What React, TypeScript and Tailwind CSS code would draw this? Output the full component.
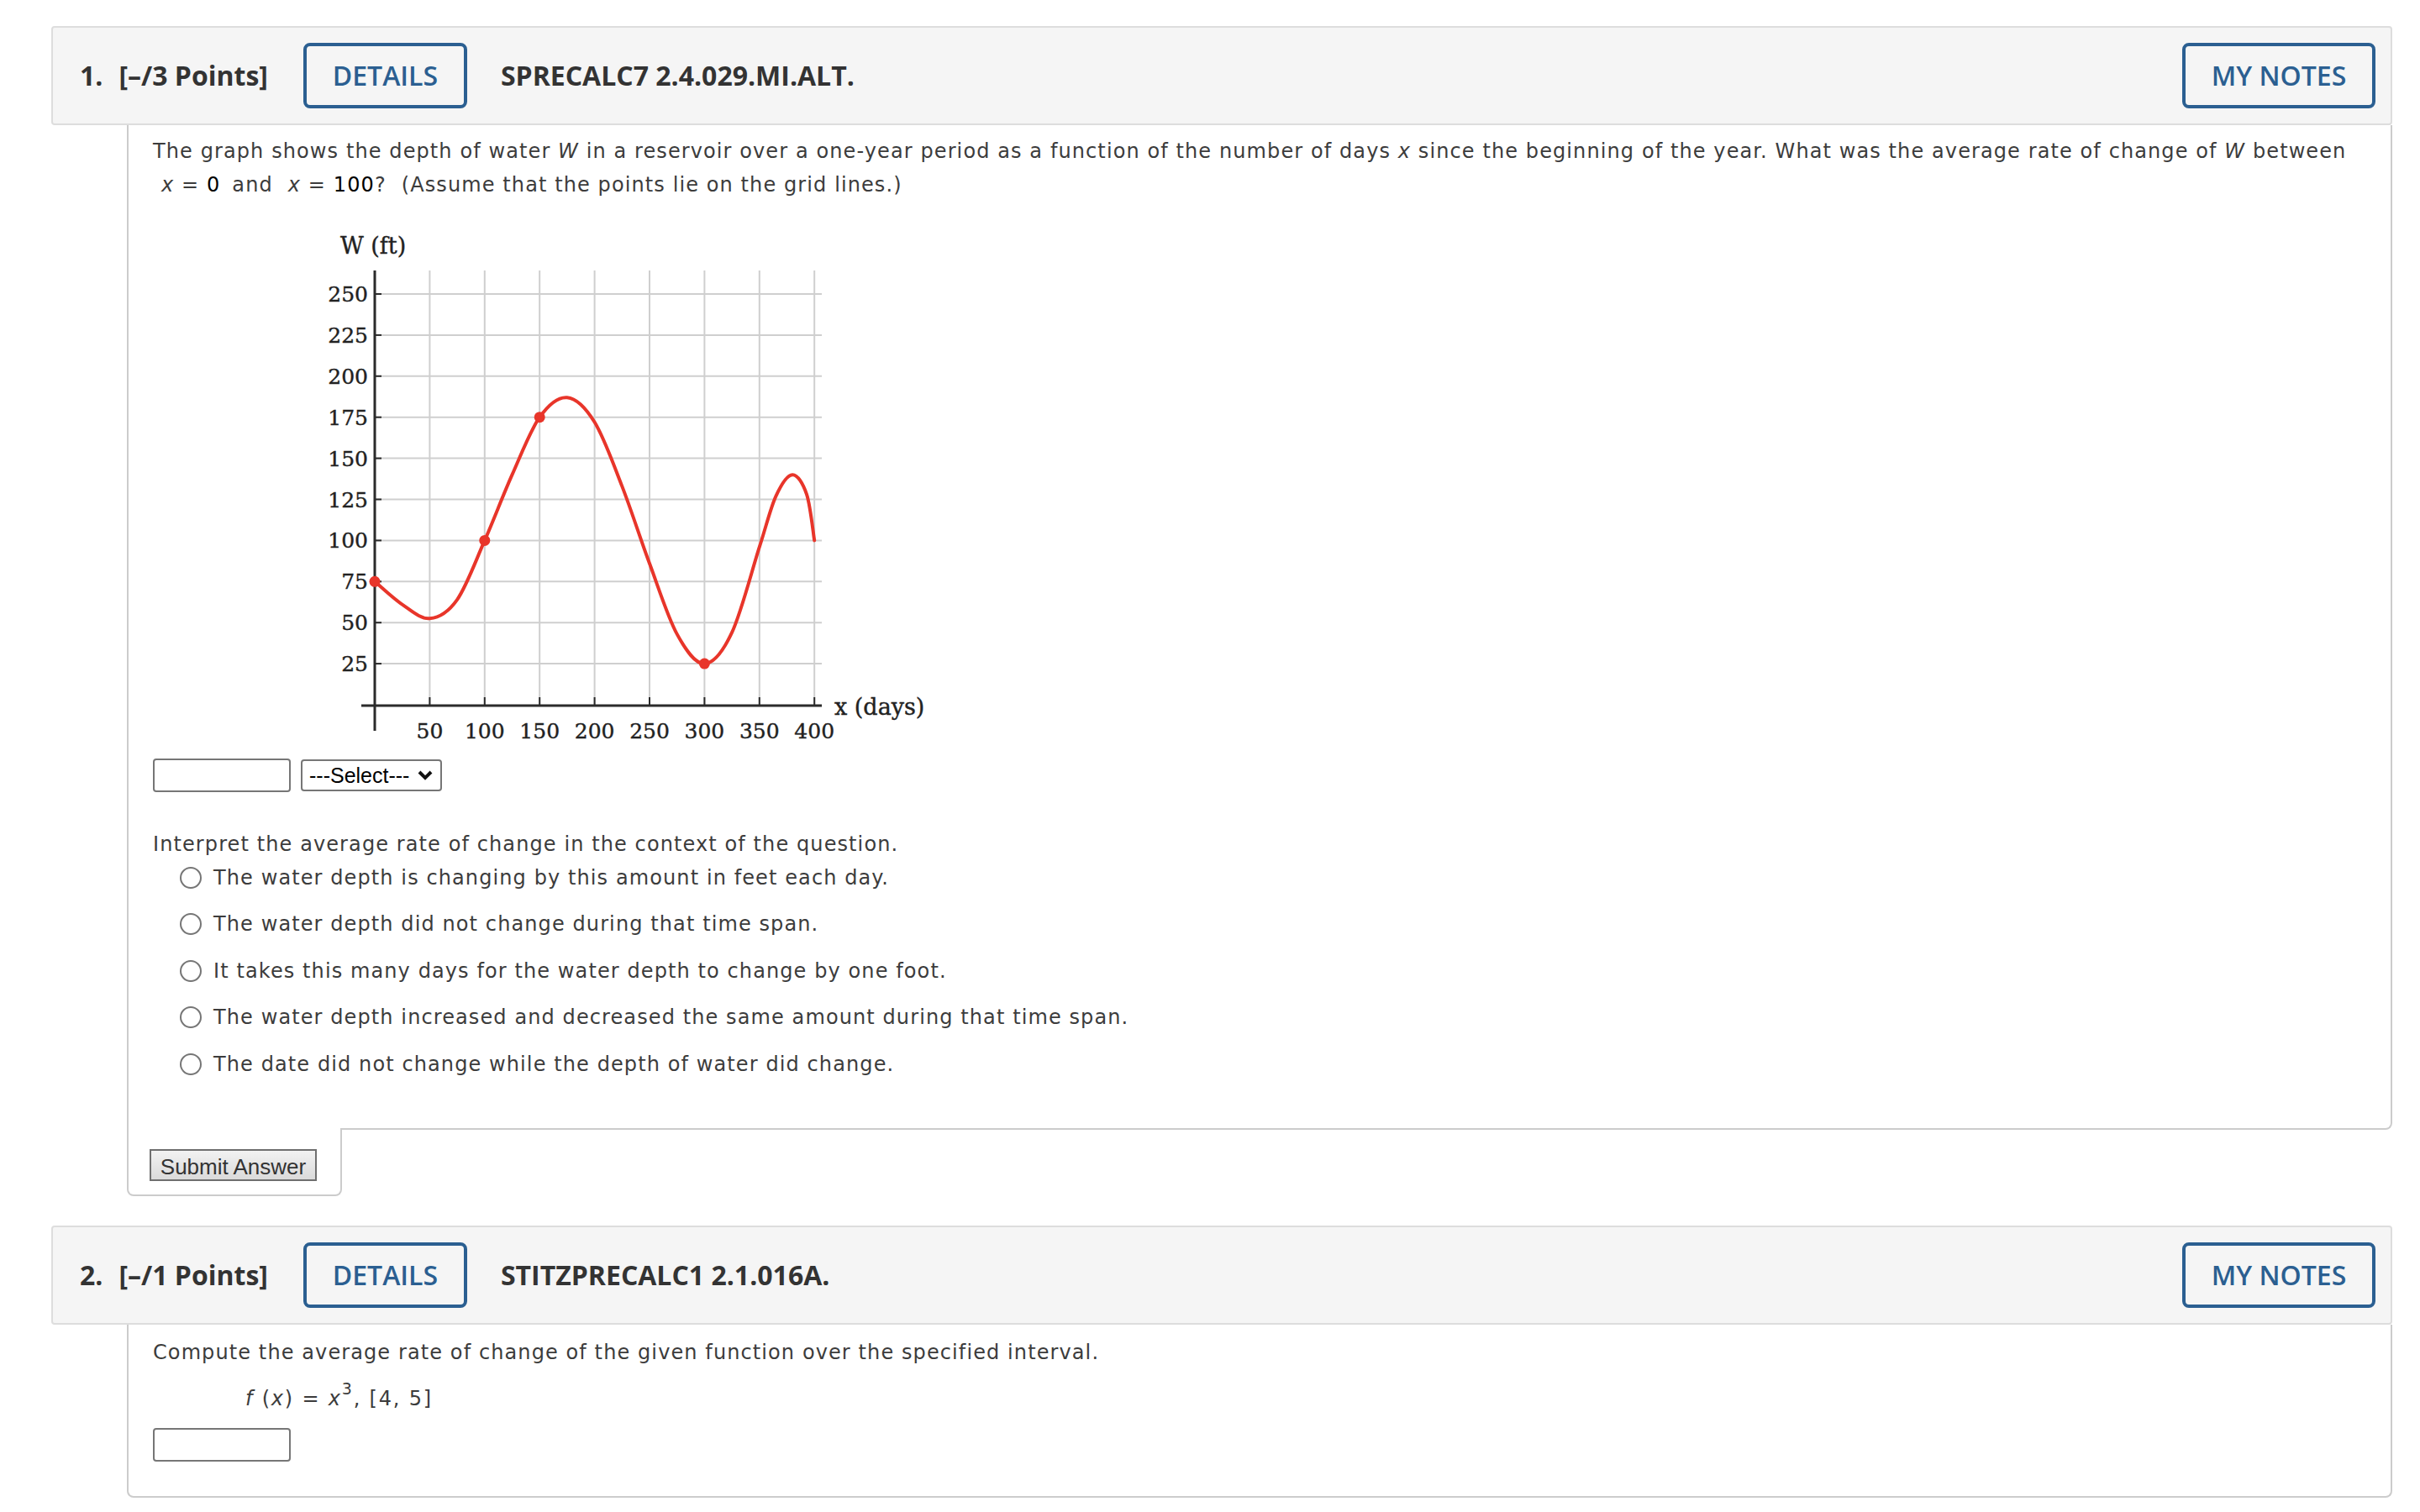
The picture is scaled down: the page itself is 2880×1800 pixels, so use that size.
import React from 'react';

// page coordinates of the plot: x days -> px, W ft -> py
const px = (x: number) => 446 + x * 1.308;
const py = (w: number) => 839 - w * 1.956;

const curvePoints: [number, number][] = [
  [0, 75], [25, 61], [50, 52.5], [75, 64], [100, 100], [125, 140], [150, 175],
  [175, 187], [200, 172], [225, 133], [250, 86], [275, 43], [300, 25], [325, 44],
  [350, 96], [365, 127], [380, 140], [393, 128], [400, 100],
];

function curvePath(pts: [number, number][]) {
  const p = pts.map(([x, w]) => [px(x), py(w)]);
  let d = `M${p[0][0]},${p[0][1]}`;
  for (let i = 0; i < p.length - 1; i++) {
    const p0 = p[i - 1] || p[i];
    const p1 = p[i];
    const p2 = p[i + 1];
    const p3 = p[i + 2] || p2;
    const c1x = p1[0] + (p2[0] - p0[0]) / 6;
    const c1y = p1[1] + (p2[1] - p0[1]) / 6;
    const c2x = p2[0] - (p3[0] - p1[0]) / 6;
    const c2y = p2[1] - (p3[1] - p1[1]) / 6;
    d += ` C${c1x},${c1y} ${c2x},${c2y} ${p2[0]},${p2[1]}`;
  }
  return d;
}

const DepthGraph = () => {
  const xs = [50, 100, 150, 200, 250, 300, 350, 400];
  const ws = [25, 50, 75, 100, 125, 150, 175, 200, 225, 250];
  const dots: [number, number][] = [[0, 75], [100, 100], [150, 175], [300, 25]];
  return (
    <svg width="760" height="620" viewBox="370 270 760 620" className="ml-[188px] mt-[30px] block tracking-normal">
      {/* grid */}
      {xs.map((x) => (
        <line key={`gx${x}`} x1={px(x)} y1={322} x2={px(x)} y2={840} stroke="#cfcfcf" strokeWidth="2" />
      ))}
      {ws.map((w) => (
        <line key={`gy${w}`} x1={446} y1={py(w)} x2={978} y2={py(w)} stroke="#cfcfcf" strokeWidth="2" />
      ))}
      {/* axes */}
      <line x1={446} y1={322} x2={446} y2={870} stroke="#2b2b2b" strokeWidth="3" />
      <line x1={430} y1={840} x2={978} y2={840} stroke="#2b2b2b" strokeWidth="3" />
      {ws.map((w) => (
        <line key={`ty${w}`} x1={446} y1={py(w)} x2={454} y2={py(w)} stroke="#2b2b2b" strokeWidth="2" />
      ))}
      {xs.map((x) => (
        <line key={`tx${x}`} x1={px(x)} y1={830} x2={px(x)} y2={840} stroke="#2b2b2b" strokeWidth="2" />
      ))}
      {/* labels */}
      <g fontFamily="'DejaVu Serif', serif" fill="#222222" fontSize="25" stroke="#222222" strokeWidth="0.4">
        {ws.map((w) => (
          <text key={`ly${w}`} x={438} y={py(w) + 9} textAnchor="end">{w}</text>
        ))}
        {xs.map((x) => (
          <text key={`lx${x}`} x={px(x)} y={879} textAnchor="middle">{x}</text>
        ))}
        <text x={405} y={302} fontSize="27">W (ft)</text>
        <text x={993} y={851} fontSize="27">x (days)</text>
      </g>
      {/* curve */}
      <path d={curvePath(curvePoints)} fill="none" stroke="#e8352a" strokeWidth="4" strokeLinecap="round" />
      {dots.map(([x, w]) => (
        <circle key={`d${x}`} cx={px(x)} cy={py(w)} r="6.5" fill="#e8352a" />
      ))}
    </svg>
  );
};

const Header = ({ num, points, code }: { num: string; points: string; code: string }) => (
  <div className="flex items-center h-[118px] rounded-[4px] border-2 border-[#dddddd] bg-[#f5f5f5] pl-[32px] pr-[18px] font-['Open_Sans',sans-serif] text-[#333333]">
    <span className="text-[32px] font-bold">{num}</span>
    <span className="ml-[19px] text-[32px] font-bold">{points}</span>
    <button className="ml-[42px] h-[78px] w-[195px] rounded-[8px] border-[4px] border-[#2b5f91] text-[32px] font-semibold text-[#2b5f91]">
      DETAILS
    </button>
    <span className="ml-[40px] text-[32px] font-bold">{code}</span>
    <button className="ml-auto h-[78px] w-[230px] rounded-[8px] border-[4px] border-[#2b5f91] text-[32px] font-semibold text-[#2b5f91]">
      MY NOTES
    </button>
  </div>
);

const AnswerBox = () => (
  <div className="h-[40px] w-[164px] rounded-[4px] border-2 border-[#767676] bg-white" />
);

const Radio = ({ label }: { label: string }) => (
  <div className="flex items-center h-[55.5px] pl-[32px]">
    <span className="inline-block h-[26px] w-[26px] rounded-full border-2 border-[#767676] bg-white" />
    <span className="ml-[14px]">{label}</span>
  </div>
);

export default function App() {
  const choices = [
    'The water depth is changing by this amount in feet each day.',
    'The water depth did not change during that time span.',
    'It takes this many days for the water depth to change by one foot.',
    'The water depth increased and decreased the same amount during that time span.',
    'The date did not change while the depth of water did change.',
  ];

  return (
    <div className="min-h-screen bg-white pt-[31px] pl-[61px] pr-[33px]">
      {/* Question 1 */}
      <Header num="1." points="[–/3 Points]" code="SPRECALC7 2.4.029.MI.ALT." />
      <div className="ml-[90px] border-x-2 border-b-2 border-[#cccccc] rounded-br-[8px] pl-[29px] pr-[30px] pt-[11px] pb-[48px] font-['DejaVu_Sans',sans-serif] text-[24px] leading-[40px] tracking-[1.1px] text-[#3c3c3c]">
        <p>
          The graph shows the depth of water <i>W</i> in a reservoir over a one-year period as a function of the number of days <i>x</i> since the beginning of the year. What was the average rate of change of <i>W</i> between
          <br />
          <span className="ml-[10px]"><i>x</i> = <span className="text-black">0</span></span>
          <span className="ml-[14px]">and</span>
          <span className="ml-[18px]"><i>x</i> = <span className="text-black">100</span>?</span>
          <span className="ml-[18px]">(Assume that the points lie on the grid lines.)</span>
        </p>

        <DepthGraph />

        <div className="mt-[13px] flex items-center gap-[12px] tracking-normal">
          <AnswerBox />
          <div className="flex h-[38px] w-[168px] items-center justify-between rounded-[4px] border-2 border-[#767676] bg-white pl-[8px] pr-[8px] font-['Liberation_Sans',Arial,sans-serif] text-[25px] text-black">
            <span>---Select---</span>
            <svg width="20" height="14" viewBox="0 0 20 14">
              <path d="M3 3 L10 10 L17 3" fill="none" stroke="#111" strokeWidth="4" />
            </svg>
          </div>
        </div>

        <p className="mt-[47px] leading-[30px]">Interpret the average rate of change in the context of the question.</p>
        <div className="-mt-[3px]">
          {choices.map((c) => (
            <Radio key={c} label={c} />
          ))}
        </div>
      </div>
      <div className="ml-[90px] -mt-[2px] w-[256px] rounded-b-[8px] border-x-2 border-b-2 border-[#cccccc] bg-white pl-[25px] pt-[25px] pb-[16px]">
        <button className="h-[38px] w-[199px] border-2 border-[#6f6f6f] bg-gradient-to-b from-[#f2f2f2] to-[#dadada] font-['Liberation_Sans',Arial,sans-serif] text-[26px] text-[#333333]">
          Submit Answer
        </button>
      </div>

      {/* Question 2 */}
      <div className="mt-[35px]">
        <Header num="2." points="[–/1 Points]" code="STITZPRECALC1 2.1.016A." />
        <div className="ml-[90px] border-x-2 border-b-2 border-[#cccccc] rounded-b-[8px] pl-[29px] pt-[13px] pb-[41px] font-['DejaVu_Sans',sans-serif] text-[24px] leading-[40px] tracking-[1.1px] text-[#3c3c3c]">
          <p>Compute the average rate of change of the given function over the specified interval.</p>
          <p className="mt-[15px] ml-[110px] tracking-[1.8px]">
            <i>f</i> (<i>x</i>) = <i>x</i><sup className="text-[19px] -top-[13px]">3</sup>, [4, 5]
          </p>
          <div className="mt-[15px]">
            <AnswerBox />
          </div>
        </div>
      </div>
    </div>
  );
}
